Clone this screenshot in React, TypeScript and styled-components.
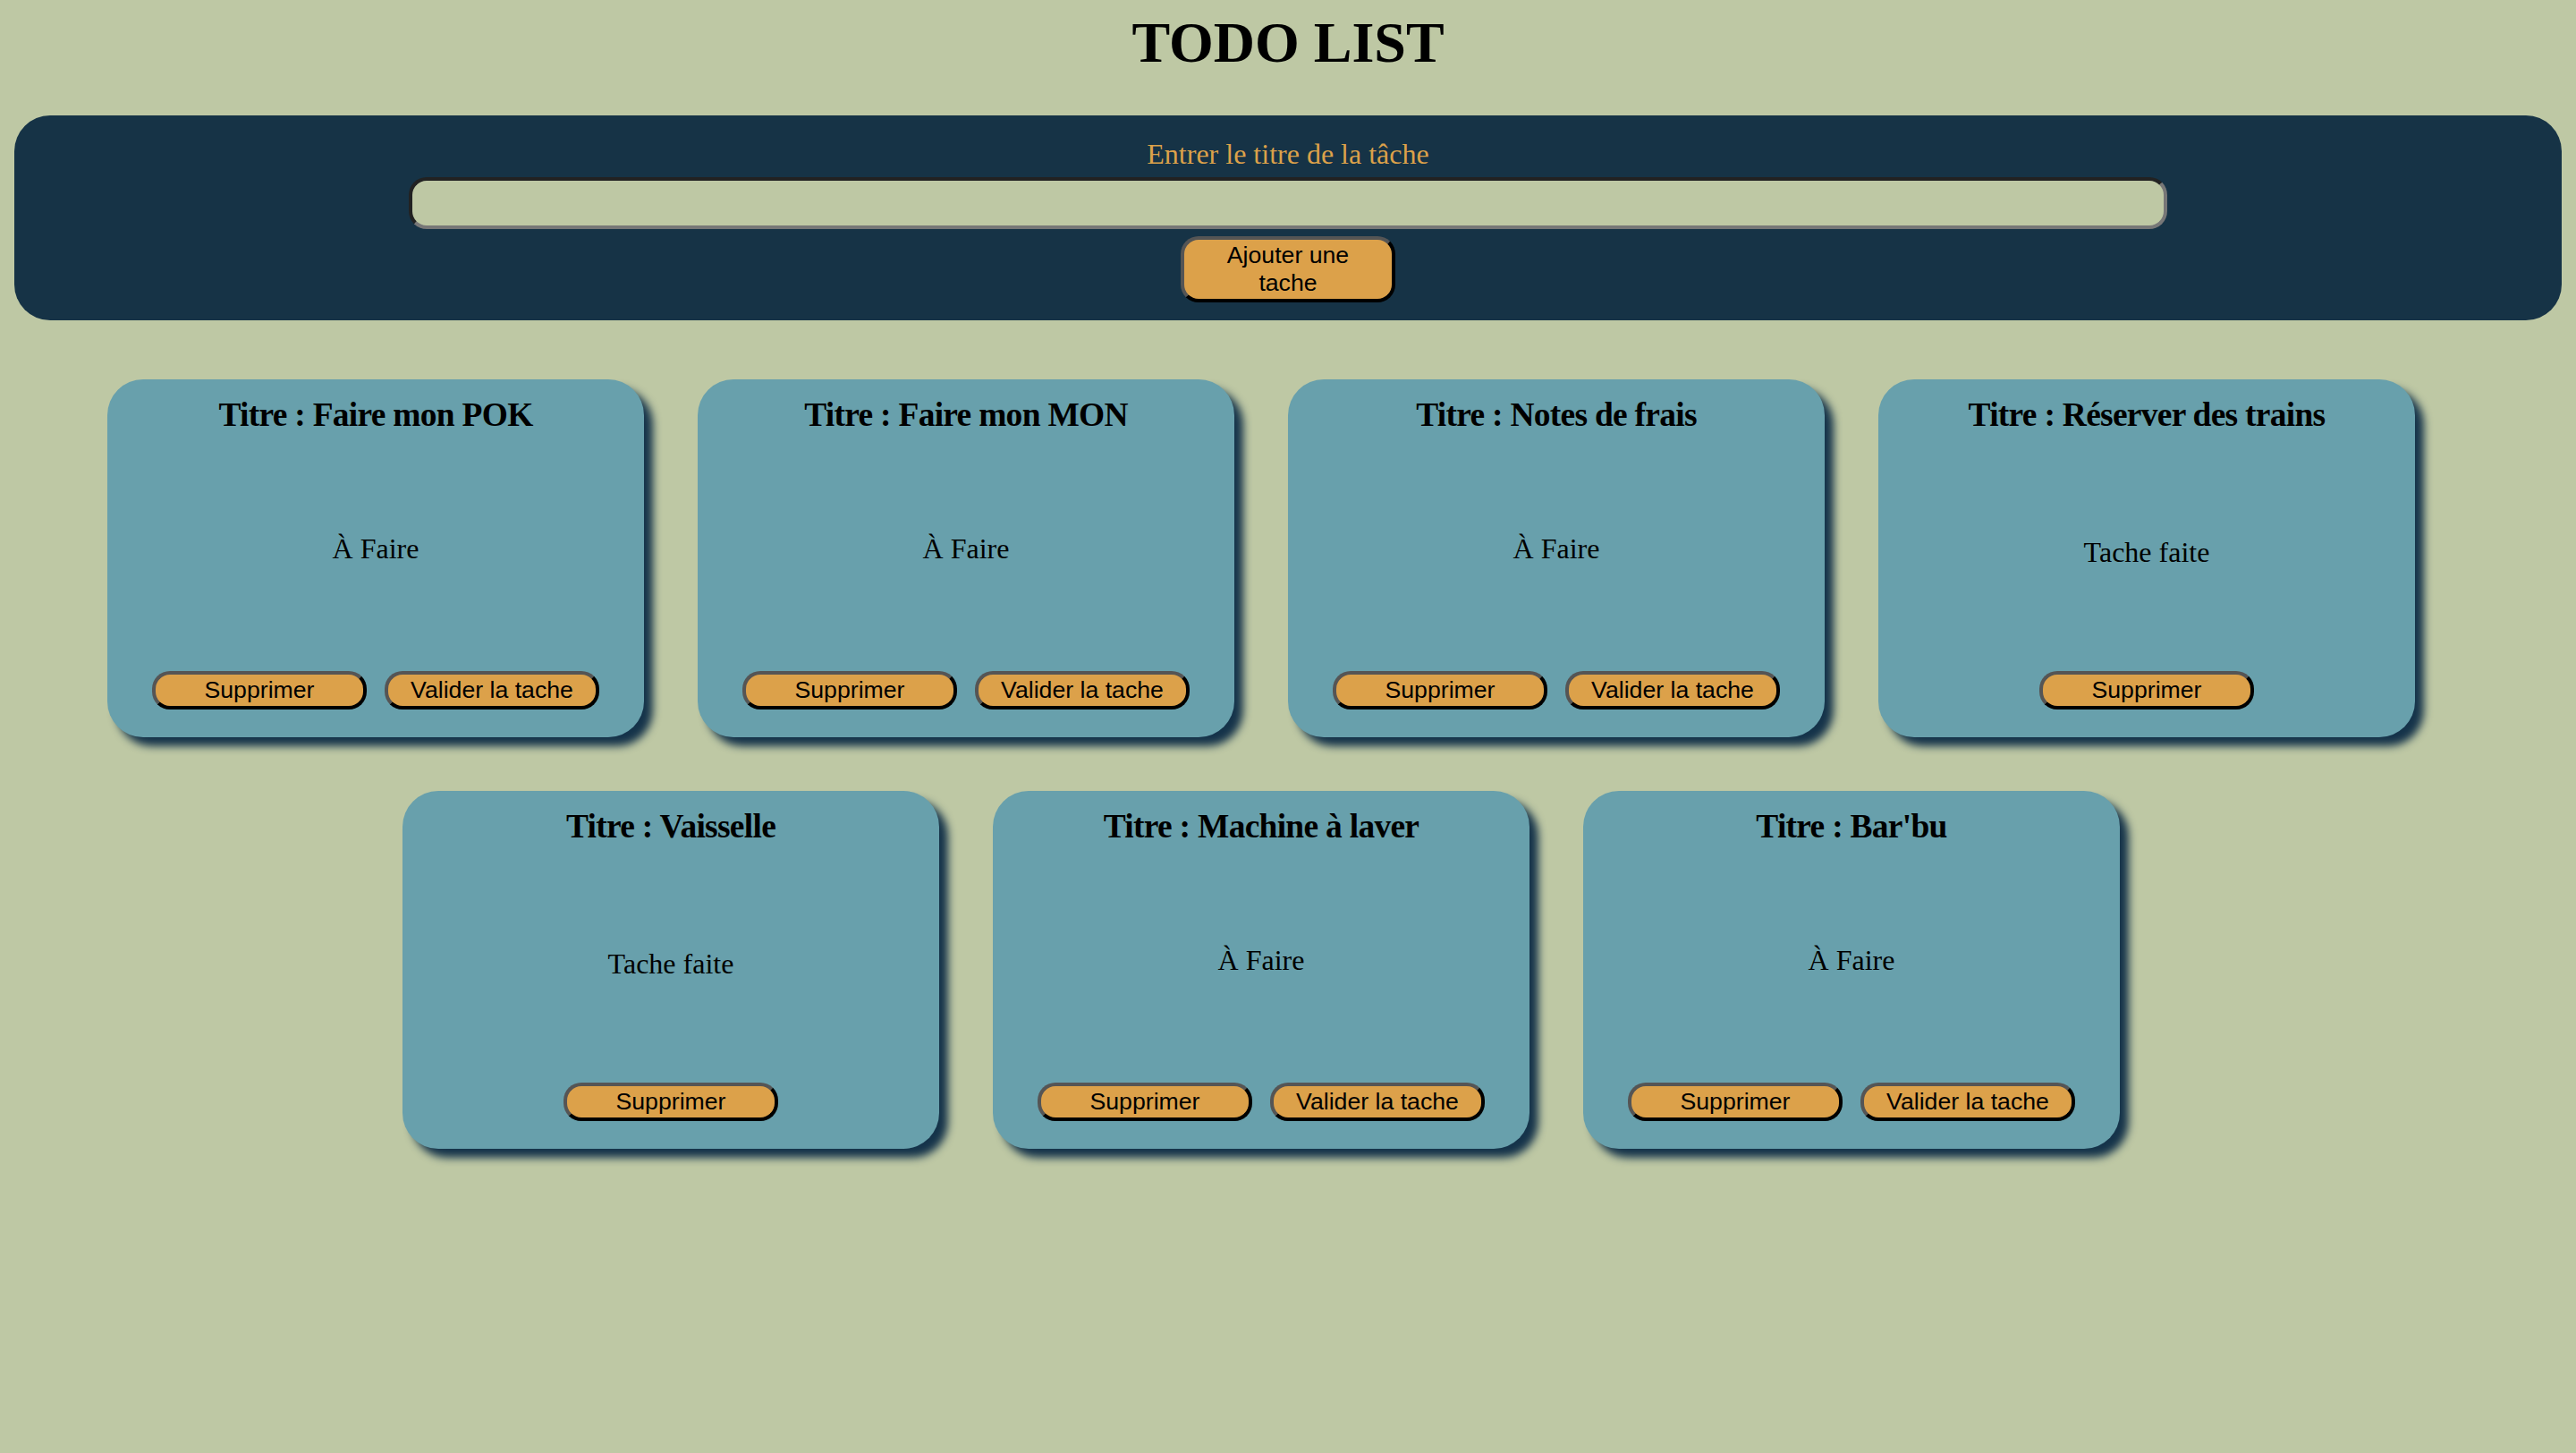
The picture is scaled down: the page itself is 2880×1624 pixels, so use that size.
import React from "react";
import styled, { createGlobalStyle } from "styled-components";

const GlobalStyle = createGlobalStyle`
  html, body {
    background: #bec8a4;
  }
  body {
    margin: 0;
    padding: 0 16px;
    font-family: "Liberation Serif", "Times New Roman", serif;
    color: #000;
  }
`;

const Title = styled.h1`
  margin: 11px 0 0;
  font-size: 64px;
  font-weight: bold;
  line-height: normal;
  text-align: center;
`;

const Form = styled.div`
  margin-top: 44px;
  background: #163346;
  border-radius: 40px;
  padding: 25px 0 20px;
  display: flex;
  flex-direction: column;
  align-items: center;
`;

const Label = styled.label`
  font-size: 32px;
  line-height: normal;
  color: #dca14a;
  margin-bottom: 7px;
`;

const Input = styled.input`
  box-sizing: border-box;
  width: 1966px;
  height: 58px;
  border: 4px solid;
  border-color: #222222 #777777 #777777 #222222;
  border-radius: 20px;
  background: #bec8a4;
  outline: none;
  padding: 2px 4px;
  font-family: "Liberation Sans", Arial, sans-serif;
  font-size: 26.67px;
`;

const Button = styled.button<{ $wide?: boolean }>`
  box-sizing: border-box;
  width: 240px;
  margin-top: ${(p) => (p.$wide ? "8px" : "0")};
  padding: 2px 12px;
  border: 4px solid;
  border-color: #555555 #000000 #000000 #555555;
  border-radius: 20px;
  background: #dca14a;
  color: #000;
  font-family: "Liberation Sans", Arial, sans-serif;
  font-size: 26.67px;
  line-height: normal;
  cursor: pointer;
`;

const Board = styled.div`
  margin-top: 66px;
  display: flex;
  flex-wrap: wrap;
  justify-content: center;
`;

const Card = styled.div`
  box-sizing: border-box;
  width: 600px;
  height: 400px;
  margin: 0 60px 60px 0;
  padding: 18px 0 31px;
  background: #68a0ac;
  border-radius: 40px;
  box-shadow: 10px 10px 10px #15334a;
  display: flex;
  flex-direction: column;
  align-items: center;
  justify-content: space-between;
`;

const CardTitle = styled.h3`
  margin: 0;
  font-size: 37.44px;
  font-weight: bold;
  line-height: normal;
  letter-spacing: -0.7px;
  text-align: center;
`;

const Status = styled.p<{ $done?: boolean }>`
  margin: 0;
  font-size: 32px;
  line-height: normal;
  position: relative;
  top: ${(p) => (p.$done ? "0" : "-4px")};
`;

const Actions = styled.div`
  display: flex;
  gap: 20px;
  justify-content: center;
`;

type Task = { title: string; done: boolean };

const tasks: Task[] = [
  { title: "Faire mon POK", done: false },
  { title: "Faire mon MON", done: false },
  { title: "Notes de frais", done: false },
  { title: "Réserver des trains", done: true },
  { title: "Vaisselle", done: true },
  { title: "Machine à laver", done: false },
  { title: "Bar'bu", done: false },
];

export default function App() {
  return (
    <>
      <GlobalStyle />
      <Title>TODO LIST</Title>
      <Form>
        <Label htmlFor="task-title">Entrer le titre de la tâche</Label>
        <Input id="task-title" type="text" />
        <Button $wide>Ajouter une tache</Button>
      </Form>
      <Board>
        {tasks.map((t) => (
          <Card key={t.title}>
            <CardTitle>Titre : {t.title}</CardTitle>
            <Status $done={t.done}>{t.done ? "Tache faite" : "À Faire"}</Status>
            <Actions>
              <Button>Supprimer</Button>
              {!t.done && <Button>Valider la tache</Button>}
            </Actions>
          </Card>
        ))}
      </Board>
    </>
  );
}
